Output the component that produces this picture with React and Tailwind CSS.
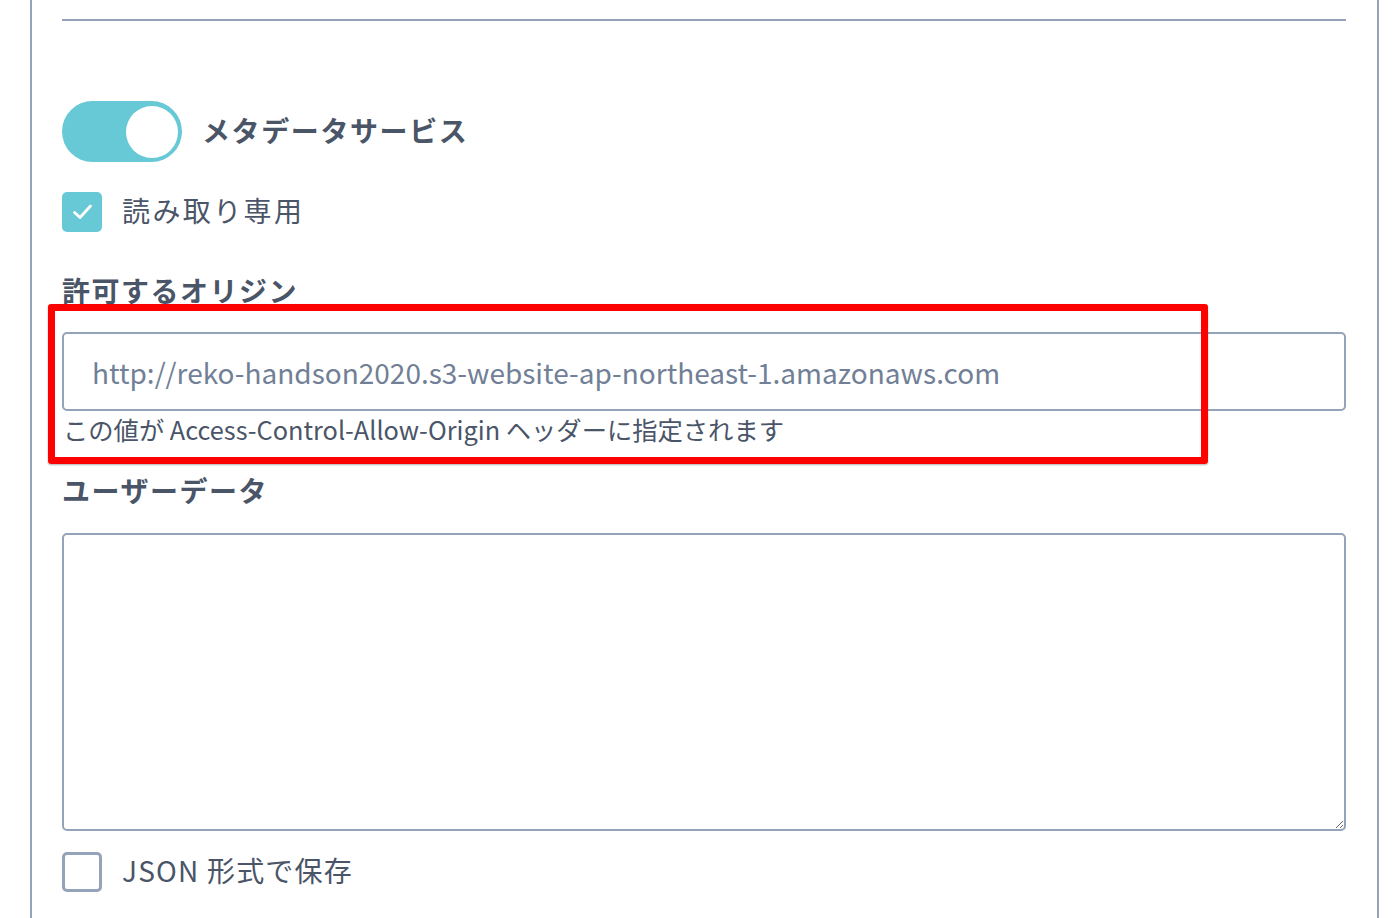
import React from "react";

const font = { fontFamily: '"Noto Sans CJK JP", "Noto Sans", sans-serif' };

function Toggle() {
  return (
    <div className="flex h-[61px] w-[120px] items-center justify-end rounded-full bg-[#66c9d5] px-[4px]">
      <div className="h-[52px] w-[52px] rounded-full bg-white" />
    </div>
  );
}

function CheckBox({ checked }) {
  if (checked) {
    return (
      <div className="h-[40px] w-[40px] rounded-[5px] bg-[#66c9d5]">
        <svg width="40" height="40" viewBox="0 0 40 40" fill="none">
          <polyline points="12.5,20.5 18,25.5 28.5,14" stroke="white" strokeWidth="2.8" strokeLinecap="round" strokeLinejoin="round" />
        </svg>
      </div>
    );
  }
  return <div className="h-[40px] w-[40px] rounded-[5px] border-[3px] border-[#94a3b8] bg-white" />;
}

export default function App() {
  return (
    <div className="relative h-[918px] w-[1394px] overflow-hidden bg-white text-[#4a5568]" style={font}>
      <div className="ml-[30px] h-[918px] w-[1349px] border-x-2 border-[#94a3b8] pl-[30px] pr-[31px]">
        <div className="pt-[19px]">
          <div className="h-[2px] bg-[#94a3b8]" />
        </div>

        <div className="mt-[80px] flex h-[61px] items-center gap-[20px]">
          <Toggle />
          <span className="pb-[4px] text-[28px] font-bold leading-[36px] tracking-[1.6px]">メタデータサービス</span>
        </div>

        <label className="mt-[30px] flex h-[40px] items-center gap-[20px]">
          <CheckBox checked />
          <span className="pb-[4px] text-[28px] leading-[36px] tracking-[2.4px]">読み取り専用</span>
        </label>

        <div className="mt-[39px] pb-[2px] text-[28px] font-bold leading-[38px] tracking-[1.5px]">許可するオリジン</div>

        <input
          type="text"
          placeholder="http://reko-handson2020.s3-website-ap-northeast-1.amazonaws.com"
          className="mt-[21px] block h-[79px] w-full rounded-[5px] border-2 border-[#94a3b8] bg-white px-[28px] text-[28px] text-[#4a5568] outline-none placeholder:text-[#718096]"
          style={font}
        />
        <div className="mt-[2px] pb-[3px] pl-[1px] text-[25.3px] leading-[33px]">
          この値が Access-Control-Allow-Origin ヘッダーに指定されます
        </div>

        <div className="mt-[22px] pb-[2px] text-[28px] font-bold leading-[38px] tracking-[1.5px]">ユーザーデータ</div>

        <textarea
          className="mt-[22px] block h-[298px] w-full rounded-[5px] border-2 border-[#94a3b8] bg-white px-[28px] py-[16px] text-[28px] outline-none"
          style={font}
        />

        <label className="mt-[21px] flex h-[40px] items-center gap-[20px]">
          <CheckBox checked={false} />
          <span className="pb-[4px] text-[28px] leading-[36px] tracking-[1.2px]">JSON 形式で保存</span>
        </label>
      </div>

      <div className="pointer-events-none absolute left-[48px] top-[304px] h-[160px] w-[1160px] rounded-[3px] border-[7px] border-[#ff0000] shadow-[0_1px_2px_rgba(0,0,0,0.3)]" />
    </div>
  );
}
